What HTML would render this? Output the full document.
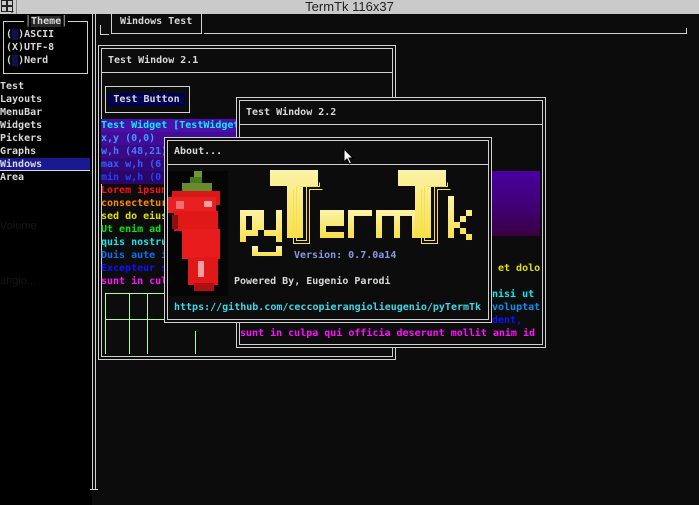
<!DOCTYPE html>
<html><head><meta charset="utf-8"><style>
*{margin:0;padding:0;box-sizing:border-box}
body{width:699px;height:505px;overflow:hidden;background:#0c0c0c;position:relative;font-family:"DejaVu Sans Mono","Liberation Mono",monospace;font-size:10px;font-weight:bold;line-height:13px;color:#d8d8d8}
.a{position:absolute;white-space:pre}
.b{position:absolute;border:1px solid #d0d0d0}
.t{position:absolute;white-space:pre;height:13px;overflow:hidden}
</style></head><body>
<div class="a" style="left:0;top:0;width:699px;height:14px;background:#cacaca"></div>
<svg class="a" style="left:0;top:0" width="16" height="14"><rect x="1.5" y="0.5" width="5" height="5" fill="none" stroke="#222"/><rect x="7.5" y="0.5" width="5" height="5" fill="none" stroke="#222"/><rect x="1.5" y="6.5" width="5" height="5" fill="none" stroke="#222"/><rect x="7.5" y="6.5" width="5" height="5" fill="none" stroke="#222"/><path d="M10 11h4l-2 2z" fill="#222"/></svg>
<div class="a" style="left:16px;top:0;width:1px;height:14px;background:#888"></div>
<div class="a" style="left:0;top:0;width:699px;text-align:center;font-family:'Liberation Sans',sans-serif;font-weight:normal;font-size:13px;line-height:14px;color:#222">TermTk 116x37</div>
<div class="a" style="left:0;top:14px;width:92px;height:491px;background:#000"></div>
<div class="a" style="left:0;top:220px;color:#151515;font-family:'Liberation Sans',sans-serif;font-weight:normal;font-size:11px">Volume</div>
<div class="a" style="left:0;top:275px;color:#151515;font-family:'Liberation Sans',sans-serif;font-weight:normal;font-size:11px">angio...</div>
<div class="b" style="left:3px;top:21px;width:85px;height:53px"></div>
<div class="t" style="left:24px;top:15px;background:#000;padding:0 1px">│<span style="background:#2a2a2a">Theme</span>│</div>
<div class="t" style="left:6px;top:28px">(<span style="background:#101050"> </span>)ASCII</div>
<div class="t" style="left:6px;top:41px">(X)UTF-8</div>
<div class="t" style="left:6px;top:54px">(<span style="background:#101050"> </span>)Nerd</div>
<div class="t" style="left:0;top:80px">Test</div>
<div class="t" style="left:0;top:93px">Layouts</div>
<div class="t" style="left:0;top:106px">MenuBar</div>
<div class="t" style="left:0;top:119px">Widgets</div>
<div class="t" style="left:0;top:132px">Pickers</div>
<div class="t" style="left:0;top:145px">Graphs</div>
<div class="t" style="left:0;top:158px;width:90px;background:#1a1a90;border-bottom:1px solid #ddd;height:13px">Windows</div>
<div class="t" style="left:0;top:171px">Area</div>
<div class="a" style="left:92px;top:14px;width:4px;height:476px;border-left:1px solid #d0d0d0;border-right:1px solid #d0d0d0"></div>
<div class="a" style="left:90px;top:489px;width:8px;height:1px;background:#d0d0d0"></div>
<div class="a" style="left:100px;top:25px;width:9px;height:10px;border-left:1px solid #d0d0d0;border-bottom:1px solid #d0d0d0"></div>
<div class="a" style="left:111px;top:12px;width:91px;height:22px;border:1px solid #d0d0d0;border-top:none"></div>
<div class="t" style="left:120px;top:15px">Windows Test</div>
<div class="a" style="left:204px;top:33px;width:483px;height:1px;background:#d0d0d0"></div>
<div class="a" style="left:686px;top:28px;width:1px;height:6px;background:#d0d0d0"></div>
<div class="b" style="left:98px;top:45px;width:298px;height:315px"></div>
<div class="b" style="left:101px;top:48px;width:292px;height:309px"></div>
<div class="t" style="left:108px;top:54px">Test Window 2.1</div>
<div class="a" style="left:101px;top:72px;width:292px;height:1px;background:#d0d0d0"></div>
<div class="b" style="left:105px;top:86px;width:85px;height:27px"></div>
<div class="t" style="left:108px;top:93px;width:77px;background:#000050;text-align:center">Test Button</div>
<div class="t" style="left:101px;top:119px;width:135px;background:#4a10a8;color:#00f0ff">Test Widget [TestWidget]</div>
<div class="t" style="left:101px;top:132px;width:135px;background:#420c98;color:#3aa0ff">x,y (0,0)</div>
<div class="t" style="left:101px;top:145px;width:135px;background:#3a0a88;color:#3a80ff">w,h (48,21)</div>
<div class="t" style="left:101px;top:158px;width:135px;background:#320878;color:#3060ff">max w,h (6</div>
<div class="t" style="left:101px;top:171px;width:135px;background:#2a0668;color:#2040ff">min w,h (0</div>
<div class="t" style="left:101px;top:184px;color:#ff1010">Lorem ipsum</div>
<div class="t" style="left:101px;top:197px;color:#ff8a00">consectetur</div>
<div class="t" style="left:101px;top:210px;color:#e0e000">sed do eiusm</div>
<div class="t" style="left:101px;top:223px;color:#10e010">Ut enim ad m</div>
<div class="t" style="left:101px;top:236px;color:#10e8f0">quis nostrud</div>
<div class="t" style="left:101px;top:249px;color:#1070f0">Duis aute ir</div>
<div class="t" style="left:101px;top:262px;color:#1010ff">Excepteur si</div>
<div class="t" style="left:101px;top:275px;color:#ff10ff">sunt in cul</div>
<svg class="a" style="left:100px;top:290px" width="110" height="66"><g fill="#a8ffa0"><rect x="5" y="3" width="1" height="61"/><rect x="29" y="3" width="1" height="61"/><rect x="47" y="3" width="1" height="61"/><rect x="95" y="41" width="1" height="23"/><rect x="5" y="3" width="59" height="1"/><rect x="5" y="29" width="59" height="1"/></g></svg>
<div class="b" style="left:236px;top:97px;width:310px;height:251px;background:#0c0c0c"></div>
<div class="b" style="left:239px;top:100px;width:304px;height:245px"></div>
<div class="t" style="left:246px;top:106px">Test Window 2.2</div>
<div class="a" style="left:239px;top:124px;width:304px;height:1px;background:#d0d0d0"></div>
<div class="a" style="left:492px;top:171px;width:48px;height:65px;background:linear-gradient(#4a00a0,#440088 30%,#400070 60%,#3a0040)"></div>
<div class="t" style="left:498px;top:262px;color:#e0e000">et dolo</div>
<div class="t" style="left:492px;top:288px;color:#10e8f0">nisi ut</div>
<div class="t" style="left:492px;top:301px;color:#1090f0">voluptat</div>
<div class="t" style="left:492px;top:314px;color:#1010ff">dent,</div>
<div class="t" style="left:240px;top:327px;color:#ff10ff">sunt in culpa qui officia deserunt mollit anim id</div>
<div class="b" style="left:164px;top:137px;width:328px;height:186px;background:#0c0c0c"></div>
<div class="b" style="left:167px;top:140px;width:322px;height:180px"></div>
<div class="t" style="left:174px;top:145px">About...</div>
<div class="a" style="left:167px;top:164px;width:322px;height:1px;background:#d0d0d0"></div>
<svg class="a" style="left:168px;top:171px" width="60" height="125">
<rect width="60" height="125" fill="#050505"/>
<rect x="26" y="0" width="8" height="6" fill="#6a9a30"/><rect x="22" y="6" width="12" height="8" fill="#4a7a20"/>
<rect x="14" y="12" width="30" height="10" fill="#6a8a30"/>
<rect x="4" y="20" width="48" height="14" fill="#d81818"/><rect x="0" y="26" width="48" height="16" fill="#e82020"/>
<rect x="6" y="40" width="44" height="20" fill="#e01818"/><rect x="14" y="58" width="38" height="30" fill="#e81c1c"/>
<rect x="20" y="86" width="30" height="28" fill="#e01818"/><rect x="26" y="112" width="20" height="8" fill="#b01010"/>
<rect x="8" y="30" width="8" height="8" fill="#f07070"/><rect x="36" y="30" width="8" height="6" fill="#f0a0a0"/>
<rect x="30" y="90" width="6" height="16" fill="#f0a0a0"/><rect x="4" y="44" width="6" height="14" fill="#901010"/>
</svg>
<svg class="a" style="left:236px;top:168px" width="250" height="96">
<defs><linearGradient id="g" x1="0" y1="0" x2="0" y2="1"><stop offset="0" stop-color="#fbf3a8"/><stop offset="1" stop-color="#f8e048"/></linearGradient></defs>
<g fill="url(#g)">
<path d="M4 42h18v6h-12v14h12v6h-12v6h-6zM16 48h6v14h-6z"/>
<path d="M22 42h6v20h12v-20h6v32h-6v-6h-12v-6h-6z"/>
<path d="M16 78h6v6h18v-6h6v10h-30z"/>
<path d="M34 2h48v16h-15v52h-16v-52h-17z"/>
<path d="M84 42h24v16h-18v6h18v6h-24zM90 48h12v4h-12z"/>
<path d="M112 42h24v6h-18v22h-6z"/>
<path d="M140 42h42v28h-6v-22h-12v22h-6v-22h-12v22h-6z"/>
<path d="M162 2h48v16h-15v52h-16v-52h-17z"/>
<path d="M212 28h6v26h6v-6h6v-6h6v6h-6v6h-6v6h6v6h6v6h-6v-6h-6v-6h-6v10h-6z"/>
</g>
<g fill="none" stroke="#f8e048" stroke-width="1"><path d="M63.5 18.5h20v-4M60.5 18.5v54h10v-54M57.5 21.5v54h16v-54h13"/><path d="M191.5 18.5h20v-4M188.5 18.5v54h10v-54M185.5 21.5v54h16v-54h13"/></g>
</svg>
<div class="t" style="left:294px;top:249px;color:#8898e0">Version: 0.7.0a14</div>
<div class="t" style="left:234px;top:275px">Powered By, Eugenio Parodi</div>
<div class="t" style="left:174px;top:301px;color:#40d8e8">https://github.com/ceccopierangiolieugenio/pyTermTk</div>
<svg class="a" style="left:343px;top:148px" width="12" height="18"><path d="M1 1v13l3-3 2.5 5 2-1-2.5-5h4z" fill="#fff" stroke="#000" stroke-width="1"/></svg>
</body></html>
